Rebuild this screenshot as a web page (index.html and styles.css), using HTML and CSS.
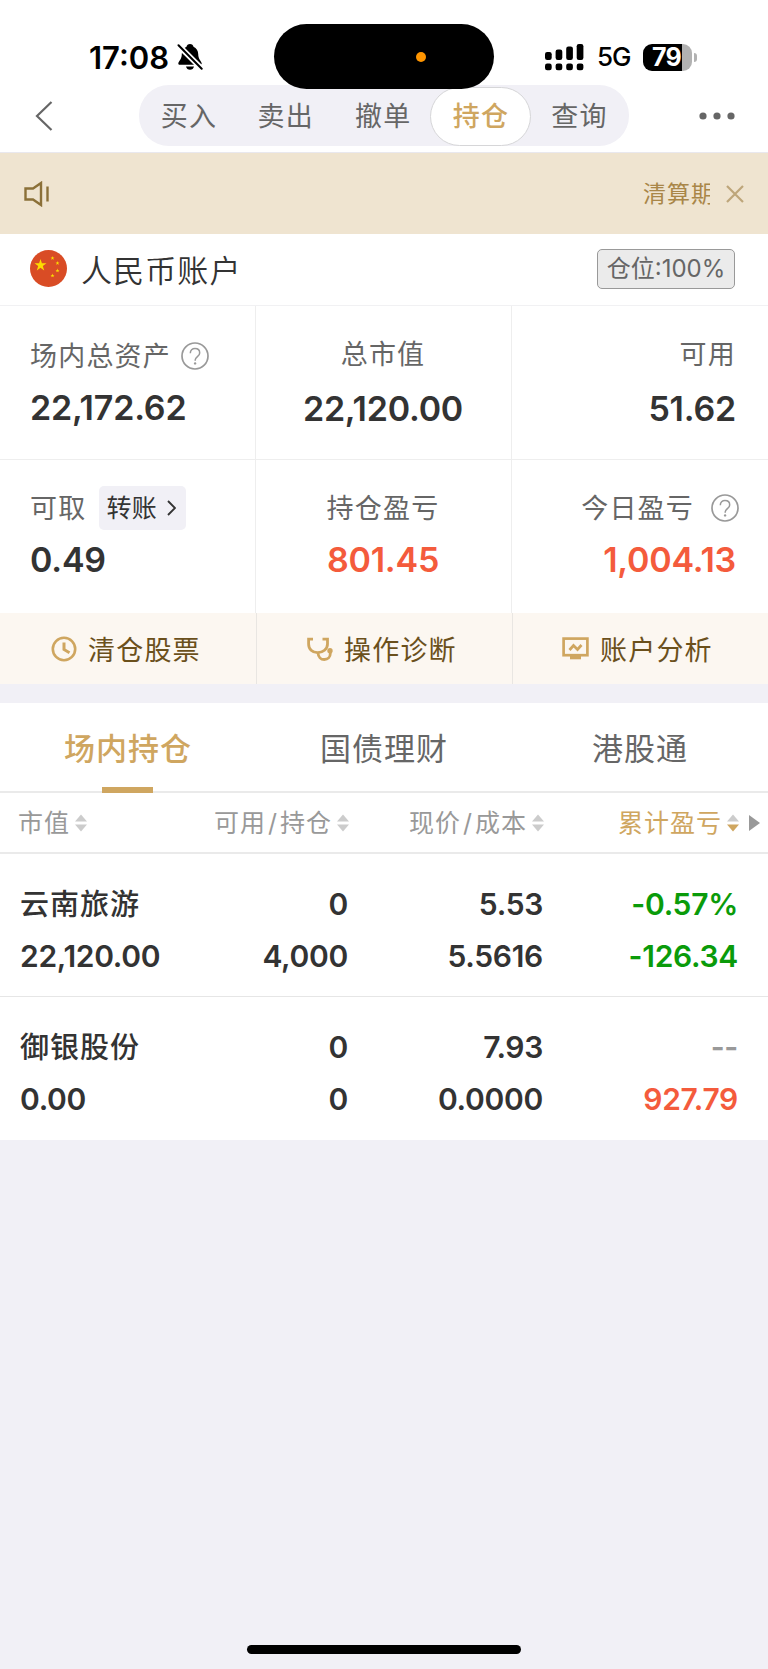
FILE: index.html
```html
<!DOCTYPE html>
<html lang="zh-CN">
<head>
<meta charset="utf-8">
<title>持仓</title>
<link rel="stylesheet" href="styles.css">
</head>
<body>
<svg class="defs" width="0" height="0">
  <symbol id="help" viewBox="0 0 28 28">
    <circle cx="14" cy="14" r="13" fill="none" stroke="#999" stroke-width="1.7"/>
    <path d="M9.3 11.2c0-2.9 2-4.6 4.7-4.6s4.7 1.7 4.7 4.3c0 3.6-4.5 3.7-4.5 7.2v.6" fill="none" stroke="#999" stroke-width="1.5"/>
    <circle cx="14.1" cy="21.4" r="1.2" fill="#999"/>
  </symbol>
  <symbol id="sort" viewBox="0 0 12 18">
    <path d="M6 0.5l6 7H0z" fill="#ccc"/>
    <path d="M6 17.5l6-7H0z" fill="currentColor"/>
  </symbol>
</svg>
<div class="screen">
  <header class="header">
    <div class="status">
      <div class="status-left">
        <span class="clock">17:08</span>
        <svg class="bell" width="26" height="28" viewBox="0 0 26 28">
          <path d="M13 1c1.900 0 3.300 1.200 3.500 2.700 3 1.300 4.700 4 4.700 7.300 0 5.500 3.500 7.500 3.500 9.500 0 .8-.6 1.300-1.500 1.300H2.800c-.9 0-1.500-.5-1.500-1.300 0-2 3.500-4 3.500-9.500 0-3.300 1.700-6 4.700-7.300C9.700 2.200 11.100 1 13 1z"/>
          <path d="M9 23.500h8c-.4 2-2 3.300-4 3.300s-3.600-1.300-4-3.300z"/>
          <path d="M0 1L26 27" stroke="#fff" stroke-width="5.500"/>
          <path d="M1.500 2.200L24.700 25.700" stroke="#000" stroke-width="2" stroke-linecap="round"/>
        </svg>
      </div>
      <div class="status-right">
        <svg width="39" height="28" viewBox="0 0 39 28">
          <rect x="0" y="9" width="6.700" height="8" rx="2.200"/><rect x="10.600" y="6.500" width="6.700" height="10.500" rx="2.200"/><rect x="21.200" y="3.500" width="6.700" height="13.500" rx="2.200"/><rect x="31.700" y="1" width="6.700" height="16" rx="2.200"/>
          <rect x="0" y="20.500" width="6.700" height="6.700" rx="2.200"/><rect x="10.600" y="20.500" width="6.700" height="6.700" rx="2.200"/><rect x="21.200" y="20.500" width="6.700" height="6.700" rx="2.200"/><rect x="31.700" y="20.500" width="6.700" height="6.700" rx="2.200"/>
        </svg>
        <span class="network">5G</span>
        <div class="battery"><span class="battery-level">79</span></div>
        <span class="battery-tip"></span>
      </div>
    </div>
    <div class="island"><span class="island-dot"></span></div>
    <nav class="nav">
      <svg class="back" width="18" height="32" viewBox="0 0 18 32"><path d="M16.500 2L2 16l14.500 14" fill="none" stroke="#666" stroke-width="2.200"/></svg>
      <div class="segments">
        <span class="segment">买入</span>
        <span class="segment">卖出</span>
        <span class="segment">撤单</span>
        <span class="segment segment-active">持仓</span>
        <span class="segment">查询</span>
      </div>
      <svg class="more" width="36" height="8" viewBox="0 0 36 8" fill="#666"><circle cx="4" cy="4" r="3.600"/><circle cx="18" cy="4" r="3.600"/><circle cx="32" cy="4" r="3.600"/></svg>
    </nav>
  </header>

  <div class="notice">
    <svg width="26" height="26" viewBox="0 0 26 26" fill="none" stroke="#8b7038" stroke-width="2.400"><path d="M1.500 7.500h7.500l8-5.500v22l-8-5.500H1.500z"/><path d="M23.500 5.500v15"/></svg>
    <span class="notice-text">清算期</span>
    <svg class="notice-close" width="18" height="18" viewBox="0 0 18 18"><path d="M1 1l16 16M17 1L1 17" stroke="#bda67a" stroke-width="2.200"/></svg>
  </div>

  <section class="account">
    <svg width="37" height="37" viewBox="0 0 37 37">
      <circle cx="18.500" cy="18.500" r="18.500" fill="#d94c25"/>
      <g fill="#fcdc00">
        <path d="M10.500 9l1.400 4.300h4.600l-3.700 2.700 1.400 4.400-3.700-2.700-3.700 2.700 1.400-4.400L4.500 13.300h4.600z"/>
        <path id="star" d="M22.500 6l.5 1.400h1.500l-1.200.9.500 1.500-1.300-.9-1.300.9.500-1.500-1.200-.9h1.500z"/>
        <use href="#star" x="5" y="5"/><use href="#star" x="5" y="12.500"/><use href="#star" x="0" y="17.500"/>
      </g>
    </svg>
    <h1 class="account-name">人民币账户</h1>
    <span class="position-badge">仓位:100%</span>
  </section>

  <section class="summary">
    <div class="metric metric-left lowered">
      <div class="metric-label">场内总资产<svg class="help" width="28" height="28"><use href="#help"/></svg></div>
      <div class="metric-value">22,172.62</div>
    </div>
    <div class="metric metric-center spaced">
      <div class="metric-label">总市值</div>
      <div class="metric-value">22,120.00</div>
    </div>
    <div class="metric metric-right spaced">
      <div class="metric-label">可用</div>
      <div class="metric-value">51.62</div>
    </div>
    <div class="metric metric-left">
      <div class="metric-label">可取<span class="transfer">转账<svg width="9" height="16" viewBox="0 0 9 16"><path d="M1 1l7 7-7 7" fill="none" stroke="#333" stroke-width="1.900"/></svg></span></div>
      <div class="metric-value">0.49</div>
    </div>
    <div class="metric metric-center">
      <div class="metric-label">持仓盈亏</div>
      <div class="metric-value up">801.45</div>
    </div>
    <div class="metric metric-right">
      <div class="metric-label label-help">今日盈亏<svg class="help help-wide" width="28" height="28"><use href="#help"/></svg></div>
      <div class="metric-value up">1,004.13</div>
    </div>
  </section>

  <section class="links">
    <a class="link"><svg width="26" height="26" viewBox="0 0 26 26" fill="none" stroke="#cfa660" stroke-width="2.600"><circle cx="13" cy="13" r="11.200"/><path d="M13 6.500V13.500l5.500 3.200" stroke-width="3"/></svg>清仓股票</a>
    <a class="link"><svg width="27" height="26" viewBox="0 0 27 26" fill="none" stroke="#cfa660" stroke-width="2.800"><path d="M7 3.200H2.600V8c0 5.200 3.700 8.700 9 8.700s9.900-3.500 9.900-8.700V3.200H16.500"/><path d="M12 17c.3 4 2.800 6.500 6.300 6.500 3.600 0 6-2.500 6-6v-2"/><circle cx="24" cy="14.800" r="2.700" fill="#cfa660" stroke="none"/></svg>操作诊断</a>
    <a class="link"><svg width="27" height="23" viewBox="0 0 27 23" fill="none" stroke="#cfa660" stroke-width="2.700"><rect x="1.600" y="1.600" width="23.800" height="16.600"/><path d="M7.500 13l4-4.500 4 4 4-4.500"/><path d="M8 20.300h11" stroke-width="4"/></svg>账户分析</a>
  </section>

  <section class="holdings">
    <div class="tabs">
      <span class="tab tab-active">场内持仓</span>
      <span class="tab">国债理财</span>
      <span class="tab">港股通</span>
    </div>
    <div class="thead">
      <span class="th"><b class="th-text">市值</b><svg class="sort" width="12" height="18"><use href="#sort"/></svg></span>
      <span class="th"><b class="th-text">可用<i class="slash">/</i>持仓</b><svg class="sort" width="12" height="18"><use href="#sort"/></svg></span>
      <span class="th"><b class="th-text">现价<i class="slash">/</i>成本</b><svg class="sort" width="12" height="18"><use href="#sort"/></svg></span>
      <span class="th th-active"><b class="th-text">累计盈亏</b><svg class="sort" width="12" height="18"><use href="#sort"/></svg></span>
      <svg class="scroll-arrow" width="11" height="16" viewBox="0 0 11 16"><path d="M0 0l11 8-11 8z" fill="#999"/></svg>
    </div>
    <div class="row">
      <span class="stock">云南旅游</span><span class="num">0</span><span class="num">5.53</span><span class="num down">-0.57%</span>
      <span>22,120.00</span><span class="num">4,000</span><span class="num">5.5616</span><span class="num down">-126.34</span>
    </div>
    <div class="row">
      <span class="stock">御银股份</span><span class="num">0</span><span class="num">7.93</span><span class="num none">--</span>
      <span>0.00</span><span class="num">0</span><span class="num">0.0000</span><span class="num up">927.79</span>
    </div>
  </section>
  <div class="home-indicator"></div>
</div>
</body>
</html>
```
FILE: styles.css
```css
* { box-sizing: border-box; }
body { margin: 0; background: #f1f0f6; color: #333; font-family: "Inter", "Noto Sans CJK SC", sans-serif; }
svg { display: block; flex: none; }
.defs { position: absolute; }
.screen { width: 768px; height: 1669px; display: flex; flex-direction: column; background: #f1f0f6; white-space: nowrap; }

.header { position: relative; height: 153px; background: #fff; border-bottom: 1px solid #e9e8ee; }
.status { height: 85px; padding: 29px 71px 0 89px; display: flex; justify-content: space-between; color: #000; }
.status-left, .status-right { display: flex; align-items: center; height: 56px; }
.clock { font-size: 31px; font-weight: 600; line-height: 57px; }
.bell { margin-left: 8px; }
.network { margin-left: 13px; width: 34px; font-size: 26px; font-weight: 500; line-height: 58px; letter-spacing: -1px; }
.battery { margin-left: 12px; width: 49px; height: 27px; border-radius: 9px; background: linear-gradient(90deg, #000 39px, #b2b2b2 39px); color: #fff; }
.battery-level { display: block; padding-left: 9px; font-size: 25px; font-weight: 700; line-height: 27px; letter-spacing: -0.8px; }
.battery-tip { margin-left: 2px; width: 3px; height: 9px; border-radius: 0 3px 3px 0; background: #b2b2b2; }
.island { position: absolute; z-index: 2; left: 274px; top: 24px; width: 220px; height: 65px; border-radius: 33px; background: #000; }
.island-dot { position: absolute; left: 142px; top: 28px; width: 10px; height: 10px; border-radius: 50%; background: #ff9500; }
.nav { height: 61px; padding: 0 33px 0 35px; display: flex; align-items: center; }
.segments { display: flex; width: 490px; height: 61px; margin-left: 86px; padding-top: 2px; border-radius: 30px; background: #f1f0f6; }
.segment { width: 97.5px; height: 59px; line-height: 59px; padding-left: 4px; text-align: center; font-size: 27px; letter-spacing: 1.2px; color: #666; }
.segment:first-child { width: 96px; }
.segment-active { padding-left: 1px; width: 101px; border: 1px solid #d6d6d8; border-radius: 30px; background: #fff; color: #cfa660; font-weight: 500; line-height: 57px; }
.segment:last-child { width: 96px; padding-left: 1px; }
.more { margin-left: auto; }

.notice { height: 81px; padding: 0 24px; display: flex; align-items: center; background: #efe4d0; }
.notice-text { width: 67px; margin-left: auto; overflow: hidden; font-size: 23px; line-height: 40px; letter-spacing: 1px; color: #a98648; }
.notice-close { margin-left: 16px; }

.account { height: 72px; padding: 0 33px 2px 30px; display: flex; align-items: center; background: #fff; border-bottom: 1px solid #f1f1f3; }
.account-name { margin: 4px 0 0 14px; font-size: 31px; font-weight: 350; line-height: 46px; letter-spacing: 1.1px; }
.position-badge { margin-left: auto; width: 138px; height: 40px; border: 1.5px solid #999; border-radius: 5px; background: #ebebeb; color: #666; font-size: 24px; line-height: 37px; text-align: center; }

.summary { display: grid; grid-template-columns: 256px 256px 256px; grid-template-rows: 154px 153px; background: #fff; }
.metric { padding: 26px 30px 0; border-right: 1px solid #eee; }
.metric:nth-child(3n) { border-right: 0; }
.metric:nth-child(-n+3) { border-bottom: 1px solid #eee; }
.metric-label { display: flex; align-items: center; height: 46px; font-size: 27px; line-height: 46px; letter-spacing: 1.2px; color: #666; }
.metric-value { height: 56px; line-height: 55px; font-size: 34px; font-weight: 600; letter-spacing: -0.2px; }
.lowered { padding-top: 28px; }
.spaced .metric-value { margin-top: 3px; }
.metric-center .metric-label { justify-content: center; }
.metric-center { text-align: center; padding-right: 31px; }
.metric-right { text-align: right; padding-right: 32px; }
.metric-right .metric-label { justify-content: flex-end; }
.label-help { margin-right: -3px; }
.help { margin: 0 0 2px 10px; }
.help-wide { margin-left: 17px; }
.transfer { display: flex; align-items: center; margin: 0 0 3px 13px; width: 87px; height: 44px; padding: 0 10px 0 7px; justify-content: space-between; border-radius: 5px; background: #f1f0f6; color: #333; font-size: 25px; letter-spacing: 0.3px; }
.up { color: #f45b3c; }
.down { color: #0a9b0a; }

.links { display: grid; grid-template-columns: 257px 256px 255px; height: 71px; background: #fcf7f1; }
.link { display: flex; align-items: center; padding-left: 51px; border-right: 1px solid #e9e6e2; font-size: 27px; letter-spacing: 1.2px; color: #6b501c; }
.link:nth-child(2) { padding-left: 49px; }
.link:last-child { border: 0; padding-left: 49px; }
.link svg { margin-right: 11px; }

.holdings { margin-top: 19px; background: #fff; }
.tabs { display: grid; grid-template-columns: repeat(3, 256px); height: 90px; border-bottom: 2px solid #eaeaea; }
.tab { position: relative; text-align: center; font-size: 31px; line-height: 91px; letter-spacing: 1px; color: #666; }
.tab-active { color: #cfa660; font-weight: 500; }
.tab-active::after { content: ""; position: absolute; left: 102px; top: 84px; width: 51px; height: 6px; background: #cfa660; }
.thead { display: grid; grid-template-columns: 160px 189px 195px 195px 29px; height: 61px; align-items: center; border-bottom: 2px solid #eaeaea; }
.th { display: flex; align-items: center; justify-content: flex-end; color: #999; }
.th-text { display: flex; font-size: 25px; font-weight: 400; line-height: 36px; letter-spacing: 1px; }
.th:first-child { justify-content: flex-start; padding-left: 18px; }
.th-active { color: #cfa660; }
.slash { width: 14px; text-align: center; font-style: normal; }
.sort { margin-left: 5px; color: #ccc; }
.th-active .sort { color: #cfa660; }
.scroll-arrow { margin-left: 10px; }
.row { display: grid; grid-template-columns: 160px 168px 195px 195px; height: 143px; padding: 24px 0 0 20px; grid-auto-rows: 52px; line-height: 52px; font-size: 30px; font-weight: 600; letter-spacing: -0.3px; border-bottom: 1px solid #e6e6e6; }
.row:last-child { border-bottom: 0; }
.stock { font-size: 29px; font-weight: 500; line-height: 54px; letter-spacing: 1px; }
.num { text-align: right; }
.none { color: #999; }
.home-indicator { width: 274px; height: 9px; margin: auto auto 15px; border-radius: 5px; background: #000; }
```
